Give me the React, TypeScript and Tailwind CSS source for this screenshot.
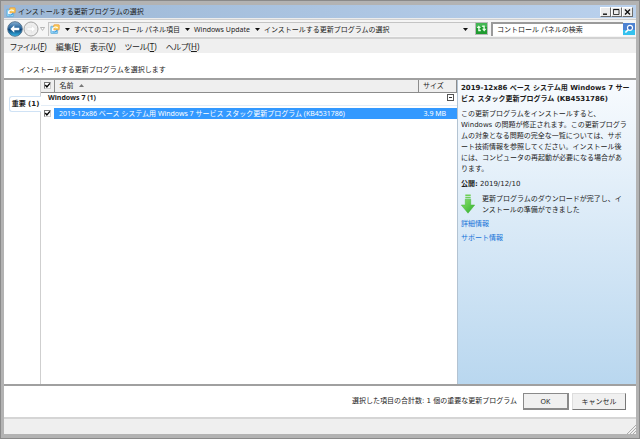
import type { ReactNode } from "react";

const menus = [
  { label: "ファイル", key: "F" },
  { label: "編集", key: "E" },
  { label: "表示", key: "V" },
  { label: "ツール", key: "T" },
  { label: "ヘルプ", key: "H" },
];

const crumbs = ["すべてのコントロール パネル項目", "Windows Update", "インストールする更新プログラムの選択"];

function PanelIcon() {
  return (
    <svg viewBox="0 0 10 10" className="size-[10px] shrink-0" aria-hidden="true">
      <rect x="0.8" y="2.3" width="6.8" height="7.2" rx="0.5" fill="#8fd3f5" stroke="#5fa9d6" strokeWidth="0.7" />
      <path d="M2 8V4.5h4V8z" fill="#f0faff" />
      <rect x="3.8" y="0.8" width="5.4" height="5" rx="0.5" fill="#f9cf5a" stroke="#ee9a3a" strokeWidth="0.8" />
      <path d="M2.4 6A3 3 0 0 1 7.6 4" fill="none" stroke="#fff" strokeWidth="1.2" />
      <path d="M2.4 7.4A3.2 3.2 0 0 0 7 6.2" fill="none" stroke="#3d9be0" strokeWidth="1.1" />
    </svg>
  );
}

function DownTriangle() {
  return (
    <svg viewBox="0 0 5 3" className="h-[3px] w-[5px] shrink-0" aria-hidden="true">
      <path d="M0 0h5L2.5 3z" fill="#111" />
    </svg>
  );
}

function CaptionButton({ label, children }: { label: string; children: ReactNode }) {
  return (
    <button aria-label={label} className="flex h-[10px] w-[11px] items-center justify-center border border-t-white border-l-white border-r-[#6b6b6b] border-b-[#6b6b6b] bg-[#ececec]">
      <svg viewBox="0 0 9 8" className="h-[8px] w-[9px]" fill="none" stroke="#111" aria-hidden="true">
        {children}
      </svg>
    </button>
  );
}

function TitleBar() {
  return (
    <header className="flex h-[13px] items-center bg-linear-to-r from-[#9cb7d5] to-[#bad1ed] pr-[3px] pl-[2px]">
      <PanelIcon />
      <h1 className="ml-[2px] flex-1">インストールする更新プログラムの選択</h1>
      <CaptionButton label="最小化">
        <path d="M2 6.2h4" strokeWidth="1.4" />
      </CaptionButton>
      <CaptionButton label="最大化">
        <path d="M1.5 1.5h5.5v5h-5.5z" strokeWidth="0.8" />
        <path d="M1.5 1.5h5.5" strokeWidth="1.2" />
      </CaptionButton>
      <CaptionButton label="閉じる">
        <path d="M2 1.5l5 5M7 1.5l-5 5" strokeWidth="1.4" />
      </CaptionButton>
    </header>
  );
}

function NavButtons() {
  return (
    <div className="flex w-[44px] shrink-0 items-center">
      <button aria-label="戻る" className="ml-[3px]">
        <svg viewBox="0 0 16 16" className="size-[16px]" aria-hidden="true">
          <defs>
            <linearGradient id="back" x1="0" y1="0" x2="0" y2="1">
              <stop offset="0" stopColor="#8ab2d4" />
              <stop offset="0.48" stopColor="#1c5c96" />
              <stop offset="0.52" stopColor="#0c3f73" />
              <stop offset="1" stopColor="#37bdf0" />
            </linearGradient>
          </defs>
          <circle cx="8" cy="8" r="7.3" fill="url(#back)" stroke="#4f6d88" strokeWidth="0.9" />
          <path d="M3.3 8l4-3.8v2.5h5v2.6h-5v2.5z" fill="#fff" />
        </svg>
      </button>
      <button aria-label="進む">
        <svg viewBox="0 0 16 16" className="size-[16px]" aria-hidden="true">
          <circle cx="8" cy="8" r="7" fill="#ededed" stroke="#a5a5a5" strokeWidth="1" />
          <path d="M12.5 8l-4-3.6v2.4h-4.5v2.4h4.5v2.4z" fill="#fff" stroke="#d8d8d8" strokeWidth="0.5" />
        </svg>
      </button>
      <button aria-label="最近のページ" className="ml-[1px]">
        <svg viewBox="0 0 5 4" className="h-[4px] w-[5px]" aria-hidden="true">
          <path d="M0.5 0.5h4L2.5 3.4z" fill="#fff" stroke="#999" strokeWidth="0.7" />
        </svg>
      </button>
    </div>
  );
}

function AddressBar() {
  return (
    <div className="flex h-[20px] items-center border-t border-b-2 border-t-[#cfcfcf] border-b-[#d2d2d2] bg-[#f5f5f5]">
      <NavButtons />
      <nav className="flex h-[14px] min-w-0 flex-1 items-center border-t border-l border-[#c4c4c4] bg-[#f0f0f0] pl-[1px]">
        <PanelIcon />
        {crumbs.map((crumb) => (
          <span key={crumb} className="flex items-center whitespace-nowrap">
            <span className="mr-[4px] ml-[5px] flex">
              <DownTriangle />
            </span>
            <a href="#">{crumb}</a>
          </span>
        ))}
        <button aria-label="以前の場所" className="mr-[7px] ml-auto">
          <DownTriangle />
        </button>
      </nav>
      <button aria-label="更新" className="flex size-[13px] shrink-0 items-center justify-center border border-[#b9b9b9]">
        <svg viewBox="0 0 11 11" className="size-[11px]" aria-hidden="true">
          <rect width="11" height="11" fill="#1f9b30" />
          <rect width="11" height="4" fill="#43b653" />
          <path d="M0.5 5L2.8 2.4 5 5H3.6v1.8h1.2v1.4H2.2V5z" fill="#e8ffe6" />
          <path d="M10.5 5.8L8.2 8.4 6 5.8h1.4V4H6.2V2.6h2.6v3.2z" fill="#e8ffe6" />
        </svg>
      </button>
      <input aria-label="コントロール パネルの検索" placeholder="コントロール パネルの検索" className="ml-[3px] h-[14px] w-[132px] border-t-2 border-l-2 border-[#9a9a9a] bg-white pl-[4px] placeholder:text-[#222]" />
      <button aria-label="検索" className="mr-[1px] shrink-0">
        <svg viewBox="0 0 12 12" className="size-[12px]" aria-hidden="true">
          <rect width="12" height="12" fill="#4d82d2" />
          <path d="M0 7h12v5H0z" fill="#35c1ee" />
          <circle cx="7" cy="4.8" r="2.5" fill="#3569bd" stroke="#fff" strokeWidth="1.2" />
          <path d="M5.2 6.7L2.4 9.5" stroke="#fff" strokeWidth="1.6" />
        </svg>
      </button>
    </div>
  );
}

function MenuBar() {
  return (
    <nav className="flex h-[14px] items-center gap-[9px] bg-[#efefef] pl-[6px] text-[8px] [font-feature-settings:'palt']">
      {menus.map((menu) => (
        <button key={menu.key}>
          {menu.label}(<span className="underline">{menu.key}</span>)
        </button>
      ))}
    </nav>
  );
}

function Check({ label }: { label: string }) {
  return (
    <span className="relative flex size-[7px]">
      <input type="checkbox" aria-label={label} defaultChecked className="peer size-[7px] appearance-none border border-t-[#777] border-l-[#777] border-r-[#ccc] border-b-[#ccc] bg-white" />
      <svg viewBox="0 0 7 7" className="pointer-events-none absolute inset-0 hidden size-[7px] peer-checked:block" aria-hidden="true">
        <path d="M1.3 3l1.6 2 3-3.6" fill="none" stroke="#000" strokeWidth="1.4" />
      </svg>
    </span>
  );
}

function UpdateTable() {
  return (
    <table className="w-full table-fixed border-collapse text-left leading-[10px]">
      <colgroup>
        <col className="w-[13px]" />
        <col />
        <col className="w-[38px]" />
      </colgroup>
      <thead>
        <tr className="h-[12px] border-b border-[#8c8c8c] bg-[#efefef]">
          <th className="border-r border-[#8c8c8c] p-0 pl-[3px]">
            <Check label="すべて選択" />
          </th>
          <th className="p-0 pl-[5px] font-normal">
            <span className="flex items-center gap-[5px]">
              名前
              <svg viewBox="0 0 5 3" className="h-[3px] w-[5px]" aria-hidden="true">
                <path d="M0 3h5L2.5 0z" fill="#777" />
              </svg>
            </span>
          </th>
          <th className="border-x border-[#8c8c8c] p-0 pl-[4px] font-normal">サイズ</th>
        </tr>
      </thead>
      <tbody>
        <tr className="h-[16px]">
          <th colSpan={3} className="p-0 align-top">
            <span className="flex items-center justify-between border-b border-[#e3edf7] pr-[3px] pb-[2px] pl-[7px]">
              Windows 7 (1)
              <button aria-label="折りたたむ" className="flex size-[7px] items-center justify-center border border-[#555]">
                <span className="h-px w-[3px] bg-[#333]" />
              </button>
            </span>
          </th>
        </tr>
        <tr className="h-[11px]">
          <td className="p-0 pl-[3px]">
            <Check label="KB4531786" />
          </td>
          <td className="bg-[#3399ff] p-0 pl-[5px] whitespace-nowrap text-white">2019-12x86 ベース システム用 Windows 7 サービス スタック更新プログラム (KB4531786)</td>
          <td className="bg-[#3399ff] p-0 pl-[5px] whitespace-nowrap text-white">3.9 MB</td>
        </tr>
      </tbody>
    </table>
  );
}

function DownloadedArrow() {
  return (
    <svg viewBox="0 0 14 20" className="h-[20px] w-[14px] shrink-0" aria-hidden="true">
      <defs>
        <linearGradient id="arrow" x1="0" y1="0" x2="1" y2="1">
          <stop offset="0" stopColor="#8be36c" />
          <stop offset="1" stopColor="#2fae2c" />
        </linearGradient>
      </defs>
      <path d="M4.3 0.5h5.4v1.4H4.3zM4.3 2.8h5.4v1.5H4.3z" fill="#6fcf57" />
      <path d="M4.3 5.2h5.4V11h4L7 19.2 0.3 11h4z" fill="url(#arrow)" stroke="#45b53b" strokeWidth="0.5" />
    </svg>
  );
}

function Details() {
  return (
    <aside className="w-[179px] shrink-0 border-l border-[#b3c3d2] bg-linear-to-b from-[#f8fbfe] to-[#b9d7ef] pt-[3px] pl-[3px] font-['DejaVu_Sans','Noto_Sans_CJK_JP',sans-serif]">
      <h2 className="font-bold whitespace-nowrap">
        2019-12x86 ベース システム用 Windows 7 サー
        <br />
        ビス スタック更新プログラム (KB4531786)
      </h2>
      <p className="mt-[4px] whitespace-nowrap">
        この更新プログラムをインストールすると、
        <br />
        Windows の問題が修正されます。この更新プログラ
        <br />
        ムの対象となる問題の完全な一覧については、サポ
        <br />
        ート技術情報を参照してください。インストール後
        <br />
        には、コンピュータの再起動が必要になる場合があ
        <br />
        ります。
      </p>
      <p className="mt-[4px]">
        <b>公開:</b> 2019/12/10
      </p>
      <div className="mt-[4px] flex gap-[7px]">
        <DownloadedArrow />
        <p className="whitespace-nowrap">
          更新プログラムのダウンロードが完了し、イ
          <br />
          ンストールの準備ができました
        </p>
      </div>
      <div className="mt-[3px] flex flex-col items-start gap-[3px] text-[#1673d8]">
        <a href="#">詳細情報</a>
        <a href="#">サポート情報</a>
      </div>
    </aside>
  );
}

export default function App() {
  return (
    <div className="flex min-h-screen flex-col border-4 border-t-[5px] border-b-[5px] border-[#b3b3b3] bg-white font-['Noto_Sans','Noto_Sans_CJK_JP',sans-serif] text-[7px] leading-[11px] text-[#1c1c1c] outline outline-1 -outline-offset-1 outline-[#8a8a8a]">
      <TitleBar />
      <div className="h-px bg-[#ececec]" />
      <AddressBar />
      <MenuBar />
      <p className="flex h-[25px] items-center pt-[8px] pl-[15px]">インストールする更新プログラムを選択します</p>
      <main className="flex flex-1 border-t-2 border-b-2 border-[#a0a0a0]">
        <div className="w-[37px] shrink-0 border-r border-[#cfcfcf]">
          <button className="mt-[16px] ml-[5px] h-[16px] w-[32px] rounded-l-[3px] border border-r-0 border-[#cfe2f5] bg-white font-['DejaVu_Sans','Noto_Sans_CJK_JP',sans-serif] font-bold whitespace-nowrap">重要 (1)</button>
        </div>
        <section className="min-w-0 flex-1">
          <UpdateTable />
        </section>
        <Details />
      </main>
      <footer className="flex h-[31px] items-center justify-end pr-[10px]">
        <span className="mr-[6px] font-['DejaVu_Sans','Noto_Sans_CJK_JP',sans-serif]">選択した項目の合計数: 1 個の重要な更新プログラム</span>
        <button className="h-[17px] w-[46px] border border-r-2 border-b-2 border-[#8a8a8a] bg-[#f0f0f0]">OK</button>
        <button className="ml-[3px] h-[17px] w-[54px] border border-t-[#ddd] border-l-[#ddd] border-r-[#777] border-b-[#777] bg-[#f0f0f0]">キャンセル</button>
      </footer>
      <div className="flex h-[17px] items-end justify-end border-t-2 border-[#d5d5d5] bg-[#efefef]">
        <svg viewBox="0 0 9 9" className="size-[9px]" stroke="#9b9b9b" strokeWidth="0.8" aria-hidden="true">
          <path d="M0 9L9 0M3 9l6-6M6 9l3-3" />
        </svg>
      </div>
    </div>
  );
}
